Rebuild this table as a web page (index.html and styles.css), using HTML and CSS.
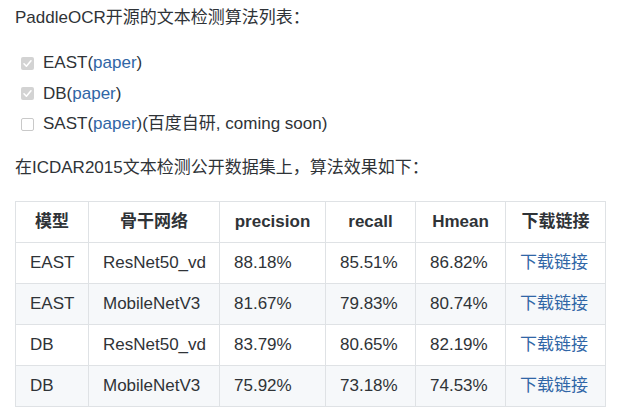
FILE: index.html
```html
<!DOCTYPE html>
<html lang="zh-CN">
<head>
<meta charset="utf-8">
<title>PaddleOCR</title>
<link rel="stylesheet" href="styles.css">
</head>
<body>
<p class="intro">PaddleOCR开源的文本检测算法列表：</p>
<ul class="tasks">
  <li><span class="box checked"><svg viewBox="0 0 13 13" width="13" height="13"><path d="M3 6.8 L5.4 9.2 L10 3.8" fill="none" stroke="#fff" stroke-width="1.6" stroke-linecap="round" stroke-linejoin="round"/></svg></span>EAST(<a href="#">paper</a>)</li>
  <li><span class="box checked"><svg viewBox="0 0 13 13" width="13" height="13"><path d="M3 6.8 L5.4 9.2 L10 3.8" fill="none" stroke="#fff" stroke-width="1.6" stroke-linecap="round" stroke-linejoin="round"/></svg></span>DB(<a href="#">paper</a>)</li>
  <li><span class="box"></span>SAST(<a href="#">paper</a>)(百度自研, coming soon)</li>
</ul>
<p class="lead">在ICDAR2015文本检测公开数据集上，算法效果如下：</p>
<table class="results">
  <colgroup>
    <col class="c1"><col class="c2"><col class="c3"><col class="c4"><col class="c5"><col class="c6">
  </colgroup>
  <thead>
    <tr><th>模型</th><th>骨干网络</th><th>precision</th><th>recall</th><th>Hmean</th><th>下载链接</th></tr>
  </thead>
  <tbody>
    <tr><td>EAST</td><td>ResNet50_vd</td><td>88.18%</td><td>85.51%</td><td>86.82%</td><td><a href="#">下载链接</a></td></tr>
    <tr><td>EAST</td><td>MobileNetV3</td><td>81.67%</td><td>79.83%</td><td>80.74%</td><td><a href="#">下载链接</a></td></tr>
    <tr><td>DB</td><td>ResNet50_vd</td><td>83.79%</td><td>80.65%</td><td>82.19%</td><td><a href="#">下载链接</a></td></tr>
    <tr><td>DB</td><td>MobileNetV3</td><td>75.92%</td><td>73.18%</td><td>74.53%</td><td><a href="#">下载链接</a></td></tr>
  </tbody>
</table>
</body>
</html>
```
FILE: styles.css
```css
html, body {
  margin: 0;
  padding: 0;
  background: #fff;
}
body {
  padding: 5px 15px 0;
  font-family: "Liberation Sans", "Noto Sans CJK SC", sans-serif;
  font-size: 17px;
  color: #2f3337;
}
a {
  color: #3066a6;
  text-decoration: none;
}
.intro {
  margin: 0 0 17px;
  line-height: 26px;
}
.tasks {
  list-style: none;
  margin: 0 0 15px;
  padding: 0 0 0 6px;
}
.tasks li {
  display: flex;
  align-items: center;
  line-height: 30.5px;
}
.box {
  box-sizing: border-box;
  width: 13px;
  height: 13px;
  margin-right: 9px;
  border: 1px solid #c9c9c9;
  border-radius: 2px;
  background: #fff;
  display: flex;
}
.box.checked {
  border: none;
  background: #d3d3d3;
}
.lead {
  margin: 0 0 20px;
  line-height: 26px;
}
.results {
  border-collapse: collapse;
  table-layout: fixed;
  width: 590px;
}
.c1 { width: 73px; }
.c2 { width: 131px; }
.c3 { width: 106px; }
.c4 { width: 90px; }
.c5 { width: 90px; }
.c6 { width: 100px; }
.results th, .results td {
  border: 1px solid #dfe2e5;
  height: 41px;
  padding: 0 14px;
  line-height: 24px;
  white-space: nowrap;
  box-sizing: border-box;
}
.results th {
  font-weight: bold;
  text-align: center;
}
.results td {
  text-align: left;
}
.results tbody tr:nth-child(even) {
  background: #f6f8fa;
}
```
